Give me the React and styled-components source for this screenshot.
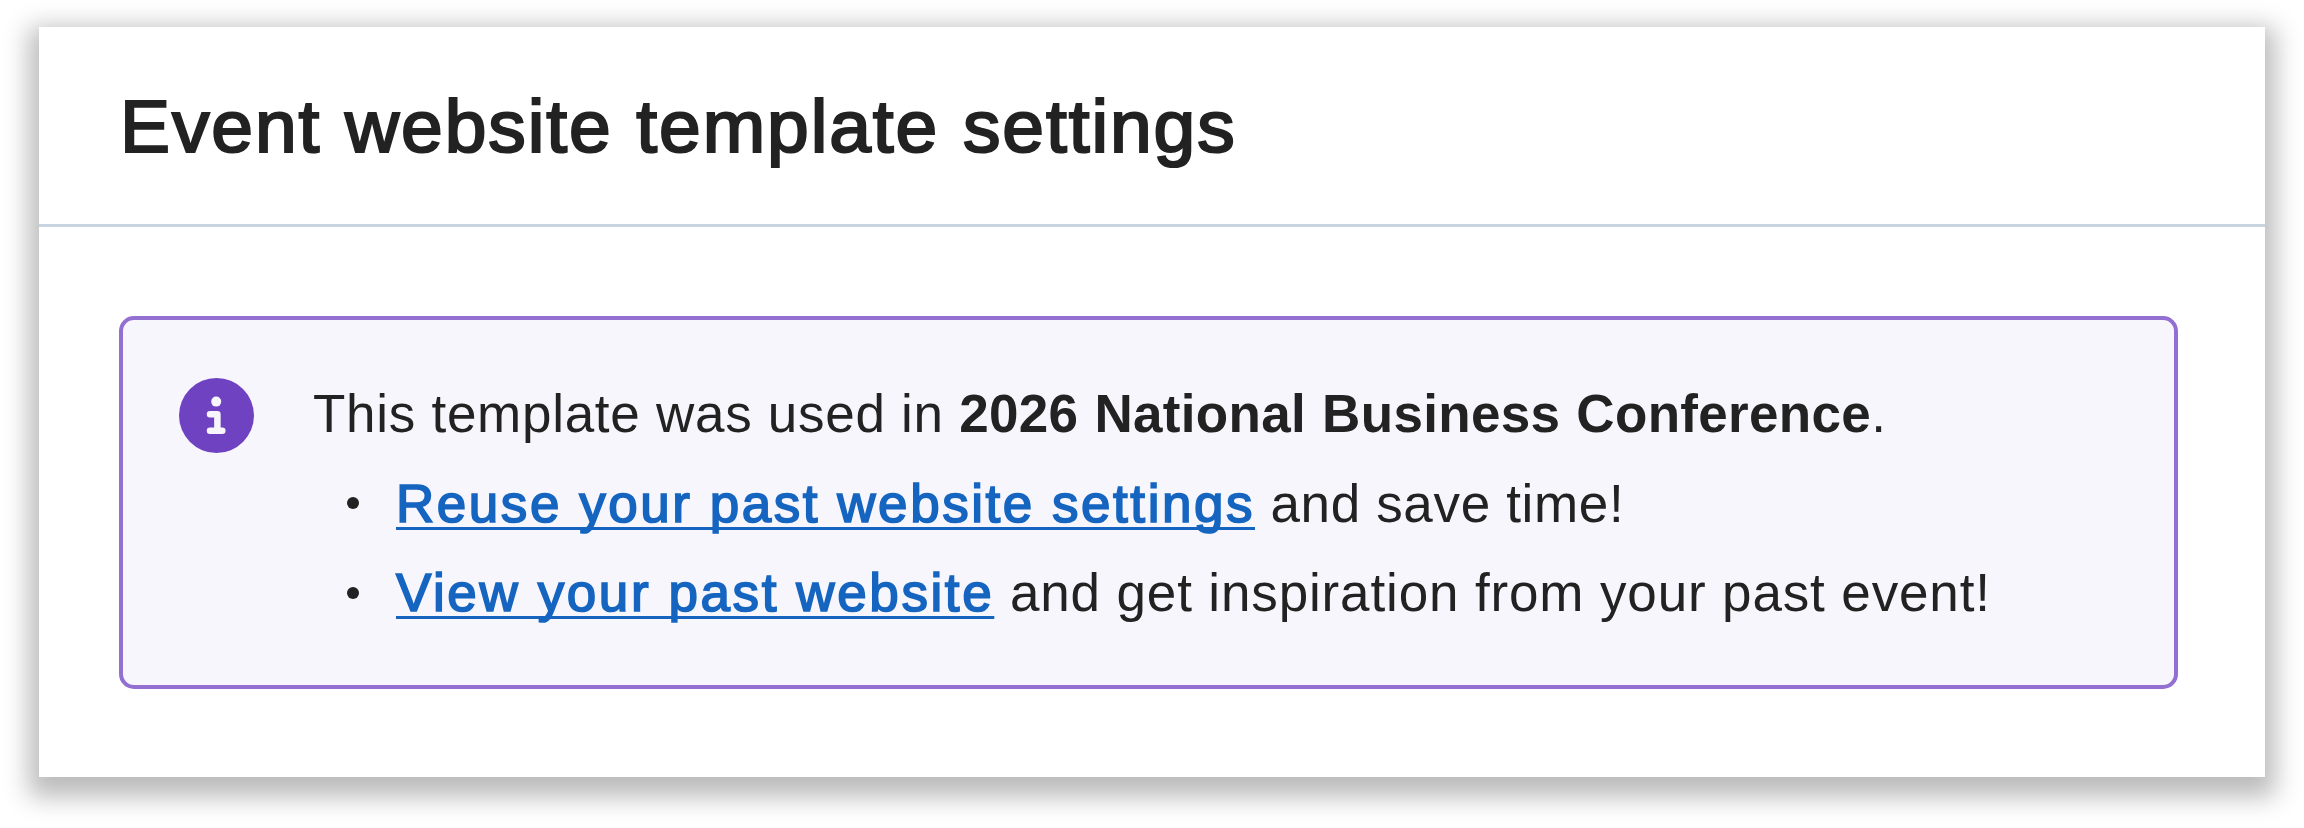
import styled, { createGlobalStyle } from "styled-components";

const App = () => {
  return (
    <>
      <GlobalStyle />
      <Page>
        <Card>
          <CardHeader>
            <Title>Event website template settings</Title>
          </CardHeader>
          <CardBody>
            <Notice>
              <InfoIcon viewBox="0 0 75 75" aria-hidden="true">
                <circle cx="37.5" cy="37.5" r="37.5" fill="#6f42c1" />
                <circle cx="37.2" cy="23.6" r="5" fill="#f7f6fd" />
                <path d="M31 36.2H38.4V52.8M31 52.8H43.3" />
              </InfoIcon>
              <Message>
                <Line>
                  <Text $spacing="0.72px">This template was used in </Text>
                  <EventName>2026 National Business Conference</EventName>
                  <Text $spacing="0.72px">.</Text>
                </Line>
                <Actions>
                  <Action>
                    <ActionLink href="#reuse" $spacing="2.54px">
                      Reuse your past website settings
                    </ActionLink>
                    <Text $spacing="0.66px"> and save time!</Text>
                  </Action>
                  <Action>
                    <ActionLink href="#view" $spacing="2.6px">
                      View your past website
                    </ActionLink>
                    <Text $spacing="0.86px">
                      {" "}
                      and get inspiration from your past event!
                    </Text>
                  </Action>
                </Actions>
              </Message>
            </Notice>
          </CardBody>
        </Card>
      </Page>
    </>
  );
};

const GlobalStyle = createGlobalStyle`
  * {
    box-sizing: border-box;
  }

  body {
    margin: 0;
    background: #ffffff;
    color: #222222;
    font-family: "Liberation Sans", Arial, sans-serif;
  }
`;

const Page = styled.main`
  height: 828px;
  padding: 27px 39px 51px;
  overflow: hidden;
`;

const Card = styled.section`
  display: flex;
  flex-direction: column;
  height: 750px;
  background: #ffffff;
  box-shadow: 0 10px 24px 10px rgba(0, 0, 0, 0.27);
`;

const CardHeader = styled.header`
  height: 200px;
  padding: 56px 81px 0;
  border-bottom: 3px solid #c8d4df;
`;

const Title = styled.h1`
  margin: 0;
  font-size: 75px;
  font-weight: 400;
  line-height: 87px;
  letter-spacing: 1.9px;
  word-spacing: 1px;
  white-space: nowrap;
  -webkit-text-stroke: 2.2px currentColor;
`;

const CardBody = styled.div`
  padding: 89px 87px 0 80px;
`;

const Notice = styled.div`
  display: flex;
  align-items: flex-start;
  gap: 59px;
  height: 373px;
  padding: 49px 56px 0;
  background: #f7f6fd;
  border: 4px solid #936fd1;
  border-radius: 15px;
`;

const InfoIcon = styled.svg`
  flex: none;
  width: 75px;
  height: 75px;
  margin-top: 9px;

  path {
    fill: none;
    stroke: #f7f6fd;
    stroke-width: 6.5;
    stroke-linecap: round;
    stroke-linejoin: round;
  }
`;

const Message = styled.div`
  font-size: 53px;
  line-height: 89.5px;
  white-space: nowrap;
`;

const Line = styled.p`
  margin: 0;
`;

const Text = styled.span`
  letter-spacing: ${({ $spacing }) => $spacing};
`;

const EventName = styled.strong`
  font-weight: 700;
  letter-spacing: 0.32px;
  word-spacing: 1px;
`;

const Actions = styled.ul`
  margin: 0;
  padding: 0 0 0 34px;
  list-style: none;
`;

const Action = styled.li`
  display: flex;
  align-items: center;
  white-space: pre;

  &::before {
    content: "";
    width: 12px;
    height: 12px;
    margin: 0 37px 0 0;
    border-radius: 50%;
    background: #222222;
  }
`;

const ActionLink = styled.a`
  color: #1565c0;
  letter-spacing: ${({ $spacing }) => $spacing};
  text-decoration: underline;
  text-decoration-thickness: 3px;
  text-decoration-skip-ink: none;
  text-underline-offset: 5px;
  -webkit-text-stroke: 1.7px currentColor;
`;

export default App;
